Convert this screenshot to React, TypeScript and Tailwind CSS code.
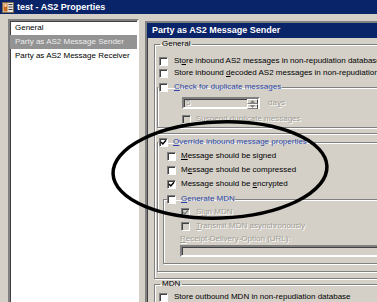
import clsx from "clsx";
import type { ReactNode } from "react";

// ===== Small Win2000-style pieces =====
function Box({ on, off }: { on?: boolean; off?: boolean }) {
  return (
    <span
      className={clsx(
        "relative flex h-[9px] w-[9px] shrink-0 items-center justify-center border border-t-[#808080] border-l-[#808080] border-r-white border-b-white shadow-[inset_1px_1px_0_#404040]",
        off ? "bg-[#d4d0c8]" : "bg-white"
      )}
    >
      {on && (
        <svg width="7" height="7" viewBox="0 0 7 7">
          <path d="M1 3 L2.8 5 L6 1.2" fill="none" stroke={off ? "#808080" : "#000"} strokeWidth="1.4" />
        </svg>
      )}
    </span>
  );
}

function U({ children }: { children: ReactNode }) {
  return <span className="underline underline-offset-[1px]">{children}</span>;
}

const dim = "text-[#a29e96] [text-shadow:1px_1px_0_#ffffff]";
const link = "text-[#2a46a6]";

function Check({
  on,
  off,
  gap = "gap-[6px]",
  className,
  children,
}: {
  on?: boolean;
  off?: boolean;
  gap?: string;
  className?: string;
  children: ReactNode;
}) {
  return (
    <div className={clsx("flex items-center whitespace-nowrap", gap, className)}>
      <Box on={on} off={off} />
      <span className={clsx(off && dim)}>{children}</span>
    </div>
  );
}

function Sunken({ className, children }: { className?: string; children?: ReactNode }) {
  return (
    <div
      className={clsx(
        "border-2 border-t-[#808080] border-l-[#808080] border-r-white border-b-white shadow-[inset_1px_1px_0_#404040]",
        className
      )}
    >
      {children}
    </div>
  );
}

const group = "border border-[#808080] shadow-[inset_1px_1px_0_#ffffff,1px_1px_0_#ffffff]";

function AppIcon() {
  return (
    <svg width="12" height="11" viewBox="0 0 12 11">
      <rect x="0.5" y="0.5" width="11" height="10" fill="#e8e4dc" stroke="#7a6a50" />
      <rect x="1.5" y="1.5" width="4" height="8" fill="#c86a1c" />
      <circle cx="3.5" cy="3.5" r="1.4" fill="#f6d0a0" />
      <rect x="6.5" y="2" width="4" height="1" fill="#404040" />
      <rect x="6.5" y="4.5" width="4" height="1" fill="#404040" />
      <rect x="6.5" y="7" width="4" height="1" fill="#404040" />
    </svg>
  );
}

export default function App() {
  return (
    <div className="relative h-[302px] w-[377px] overflow-hidden bg-[#d4d0c8] font-['Liberation_Sans',Arial,sans-serif] text-[8px] leading-[10px] text-black">
      {/* ===== Title bar ===== */}
      <div className="flex h-[14px] items-center gap-[3px] bg-[#0a246a] pl-[2px]">
        <AppIcon />
        <span className="text-[9px] font-bold text-white">test - AS2 Properties</span>
      </div>

      <div className="flex">
        {/* ===== Page list ===== */}
        <Sunken className="ml-[8px] mt-[5px] h-[300px] w-[131px] shrink-0 bg-white">
          <div className="h-[14px] pl-[5px] leading-[14px]">General</div>
          <div className="h-[14px] overflow-hidden whitespace-nowrap bg-[#939393] pl-[5px] leading-[14px] text-[#ececec]">
            Party as AS2 Message Sender
          </div>
          <div className="h-[14px] pl-[5px] leading-[14px]">Party as AS2 Message Receiver</div>
        </Sunken>

        {/* ===== Page panel ===== */}
        <Sunken className="ml-[6px] mt-[7px] h-[300px] w-[260px] shrink-0">
          <div className="h-[15px] bg-[#0a246a] pl-[5px] text-[9px] font-bold leading-[15px] text-white">
            Party as AS2 Message Sender
          </div>

          {/* General */}
          <fieldset className={clsx(group, "ml-[7px] mt-[1px] pb-[6px]")}>
            <legend className="ml-[5px] px-[2px] leading-[10px]">General</legend>
            <div className="pt-[6px]">
              <Check className="ml-[4px] h-[12px]">
                St<U>o</U>re inbound AS2 messages in non-repudiation database
              </Check>
              <Check className="ml-[4px] h-[12px]">
                Store inbound <U>d</U>ecoded AS2 messages in non-repudiation database
              </Check>
            </div>

            {/* duplicates */}
            <fieldset className={clsx(group, "ml-[2px] mt-[2px] pb-[2px]")}>
              <legend className="px-[1px]">
                <Check gap="gap-[6px]" className="h-[12px]">
                  <span className={link}>
                    <U>C</U>heck for duplicate messages
                  </span>
                </Check>
              </legend>
              <div className="ml-[24px] mt-[4px] flex items-center gap-[8px]">
                <Sunken className="flex h-[12px] w-[78px] items-center justify-between bg-[#d4d0c8]">
                  <span className={clsx(dim, "pl-[2px]")}>5</span>
                  <div className="flex h-full w-[11px] flex-col">
                    <div className="flex flex-1 items-center justify-center border border-t-white border-l-white border-r-[#404040] border-b-[#808080]">
                      <svg width="5" height="3" viewBox="0 0 5 3"><path d="M0 3 L2.5 0 L5 3Z" fill="#808080" /></svg>
                    </div>
                    <div className="flex flex-1 items-center justify-center border border-t-white border-l-white border-r-[#404040] border-b-[#808080]">
                      <svg width="5" height="3" viewBox="0 0 5 3"><path d="M0 0 L2.5 3 L5 0Z" fill="#808080" /></svg>
                    </div>
                  </div>
                </Sunken>
                <span className={dim}>
                  da<U>y</U>s
                </span>
              </div>
              <Check off gap="gap-[5px]" className="ml-[24px] mt-[4px] h-[12px]">
                Sus<U>p</U>end duplicate messages
              </Check>
            </fieldset>

            <div className="ml-[2px] mt-[5px] h-[2px] border-t border-b border-t-[#808080] border-b-white" />

            {/* override */}
            <fieldset className={clsx(group, "ml-[2px] mt-[1px] pb-[7px]")}>
              <legend className="px-[1px]">
                <Check on gap="gap-[5px]" className="h-[12px]">
                  <span className={link}>
                    <U>O</U>verride inbound message properties
                  </span>
                </Check>
              </legend>
              <div className="pt-[1px]">
                <Check gap="gap-[5px]" className="ml-[9px] h-[14px]">
                  <U>M</U>essage should be signed
                </Check>
                <Check gap="gap-[5px]" className="ml-[9px] h-[14px]">
                  M<U>e</U>ssage should be compressed
                </Check>
                <Check on gap="gap-[5px]" className="ml-[9px] h-[14px]">
                  Message should be <U>e</U>ncrypted
                </Check>
              </div>

              {/* mdn */}
              <fieldset className={clsx(group, "ml-[5px] mt-[2px] pb-[6px]")}>
                <legend className="ml-[3px]">
                  <Check gap="gap-[5px]" className="h-[12px]">
                    <span className={link}>
                      <U>G</U>enerate MDN
                    </span>
                  </Check>
                </legend>
                <Check on off gap="gap-[6px]" className="ml-[17px] h-[14px]">
                  S<U>i</U>gn MDN
                </Check>
                <Check off gap="gap-[6px]" className="ml-[17px] h-[14px]">
                  <U>T</U>ransmit MDN asynchronously
                </Check>
                <div className={clsx(dim, "ml-[16px] flex h-[11px] items-center")}>
                  <U>R</U>eceipt-Delivery-Option (URL):
                </div>
                <Sunken className="ml-[16px] mt-[1px] h-[12px] bg-[#d4d0c8]" />
              </fieldset>
            </fieldset>
          </fieldset>

          {/* MDN */}
          <fieldset className={clsx(group, "ml-[7px] pb-[4px]")}>
            <legend className="ml-[5px] px-[2px] leading-[10px]">MDN</legend>
            <Check className="ml-[4px] mt-[2px] h-[12px]">
              Store outbound MDN in non-repudiation database
            </Check>
          </fieldset>
        </Sunken>
      </div>

      {/* hand-drawn highlight */}
      <svg className="pointer-events-none absolute left-0 top-0" width="377" height="302" viewBox="0 0 377 302">
        <ellipse
          cx="220"
          cy="170"
          rx="107"
          ry="48"
          transform="rotate(-2 220 170)"
          fill="none"
          stroke="#000"
          strokeWidth="3.5"
        />
      </svg>
    </div>
  );
}
